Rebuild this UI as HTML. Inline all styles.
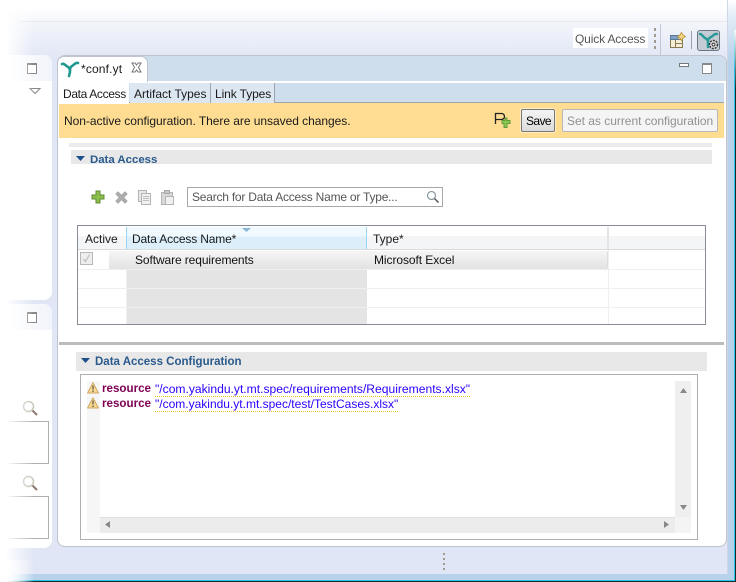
<!DOCTYPE html>
<html><head><meta charset="utf-8"><style>
html,body{margin:0;padding:0}
#r{position:relative;width:736px;height:582px;overflow:hidden;background:#fff;font-family:"Liberation Sans",sans-serif;font-size:12px;color:#1a1a1a}
#r div,#r svg{position:absolute;box-sizing:border-box}
.t{white-space:nowrap;line-height:14px}
</style></head><body><div id="r">
<div style="left:0;top:0;width:736px;height:582px;background:linear-gradient(180deg,#fff 0,#fff 8px,#f4f6fb 21px,#e0e6f5 60px)"></div>
<div style="left:20px;top:21px;width:707px;height:1px;background:#e6e8ee"></div>
<div style="left:727px;top:0;width:9px;height:582px;background:linear-gradient(180deg,#fff 0,#e8f0f8 12px,#b8d2ec 60px)"></div>
<div style="left:727px;top:0;width:1px;height:574px;background:#cfd6e6"></div>
<div style="left:0;top:574px;width:736px;height:6px;background:#b8d2ec"></div>
<div style="left:0;top:580px;width:736px;height:1px;background:#20c8e0"></div>
<div style="left:0;top:581px;width:736px;height:1px;background:#1a2a30"></div>
<div style="left:734px;top:30px;width:1px;height:551px;background:linear-gradient(180deg,#e8f4f8,#20c8e0 40px)"></div>
<div style="left:735px;top:30px;width:1px;height:552px;background:linear-gradient(180deg,#fff,#1a2a30 60px)"></div>

<div style="left:573px;top:28px;width:75px;height:20px;background:#fff"></div>
<div class="t" style="left:575px;top:32px;color:#555;letter-spacing:-.15px">Quick Access</div>
<div style="left:654px;top:28px;width:2px;height:21px;background:repeating-linear-gradient(180deg,#a09a90 0,#a09a90 3px,transparent 3px,transparent 6px)"></div>
<div style="left:660px;top:24px;width:1px;height:31px;background:#c4c8d4"></div>
<svg style="left:669px;top:32px" width="17" height="17" viewBox="0 0 17 17"><rect x="1.500" y="3.500" width="12" height="12" fill="#f4eed8" stroke="#8a7a50"/><path d="M1.500 7.500H13.500M6.500 3.500V15.500M6.500 11.500H13.500" stroke="#8a7a50" fill="none"/><path d="M1.500 3.500H9V7.500H1.500Z" fill="#7fa0c0" stroke="#5a7a9a"/><path d="M12.500 .5L14 3 16.500 4.500 14 6 12.500 8.500 11 6 8.500 4.500 11 3Z" fill="#f5d98a" stroke="#c09a40"/></svg>
<div style="left:691px;top:31px;width:1px;height:18px;background:#9aa0aa"></div>
<div style="left:697px;top:30px;width:23px;height:21px;background:#c4ccd4;border:1px solid #6c7680;border-radius:3px"></div>
<svg style="left:698px;top:31px" width="22" height="20" viewBox="0 0 22 20"><path d="M2 3C4 3 5 6 7 7 9 8 10 9 10 11L10 16M19 3C17 2 15 5 13 6 11 7 10 8 10 10" stroke="#2a9a98" stroke-width="2.500" fill="none" stroke-linecap="round"/><circle cx="15.500" cy="13.500" r="4" fill="#e8e8e8" stroke="#333" stroke-width="1.500" stroke-dasharray="2 1"/><circle cx="15.500" cy="13.500" r="1.500" fill="#fff" stroke="#333"/></svg>

<!-- left panels -->
<div style="left:-10px;top:55px;width:62px;height:245px;background:#fff;border-radius:0 8px 8px 0"></div>
<div style="left:0;top:55px;width:52px;height:26px;background:linear-gradient(90deg,#fff,#f2f4fb);border-radius:0 8px 0 0"></div>
<div style="left:27px;top:63px;width:10px;height:11px;border:1px solid #888;border-top:2px solid #888;background:#fff"></div>
<svg style="left:29px;top:88px" width="12" height="7" viewBox="0 0 12 7"><path d="M1 .5H11L6 5.500Z" fill="#fff" stroke="#888"/></svg>
<div style="left:-10px;top:304px;width:62px;height:244px;background:#fff;border-radius:0 8px 8px 0"></div>
<div style="left:0;top:304px;width:52px;height:26px;background:linear-gradient(90deg,#fff,#f2f4fb);border-radius:0 8px 0 0"></div>
<div style="left:27px;top:312px;width:10px;height:11px;border:1px solid #888;border-top:2px solid #888;background:#fff"></div>
<svg style="left:22px;top:400px" width="16" height="16" viewBox="0 0 16 16"><circle cx="6.500" cy="6.500" r="5" fill="#fff" stroke="#c4c8b8" stroke-width="1.500"/><path d="M10.500 10.500L15 15" stroke="#8a7a70" stroke-width="2"/></svg>
<svg style="left:22px;top:475px" width="16" height="16" viewBox="0 0 16 16"><circle cx="6.500" cy="6.500" r="5" fill="#fff" stroke="#c4c8b8" stroke-width="1.500"/><path d="M10.500 10.500L15 15" stroke="#8a7a70" stroke-width="2"/></svg>
<div style="left:0;top:421px;width:49px;height:43px;border:1px solid #b0b0b0;border-left:0"></div>
<div style="left:0;top:496px;width:49px;height:43px;border:1px solid #b0b0b0;border-left:0"></div>
<div style="left:0;top:0;width:34px;height:582px;background:linear-gradient(90deg,#fff 0,#fff 6px,rgba(255,255,255,.6) 16px,rgba(255,255,255,0) 100%)"></div>

<!-- editor -->
<div style="left:57px;top:55px;width:670px;height:492px;background:#fff;border:1px solid #c0c4cc;border-radius:8px"></div>
<div style="left:58px;top:56px;width:668px;height:25px;background:#cfdeed;border-radius:7px 7px 0 0"></div>
<div style="left:57px;top:56px;width:91px;height:26px;background:#fff;border:1px solid #c0c4cc;border-bottom:0;border-radius:7px 7px 0 0"></div>
<svg style="left:60px;top:60px" width="20" height="18" viewBox="0 0 20 18"><path d="M2 4C4 3 6 6 8 7 10 8 10 10 10 12L9 16M18 3C16 2 14 5 12 6 10 7 10 9 10 11" stroke="#1f9a90" stroke-width="2.600" fill="none" stroke-linecap="round"/></svg>
<div class="t" style="left:81px;top:62px;letter-spacing:.15px">*conf.yt</div>
<svg style="left:131px;top:62px" width="11" height="11" viewBox="0 0 11 11"><path d="M1 1L4 1 5.500 3 7 1 10 1 7.500 5.500 10 10 7 10 5.500 8 4 10 1 10 3.500 5.500Z" fill="#fff" stroke="#777"/></svg>
<div style="left:679px;top:63px;width:10px;height:4px;background:#fff;border:1px solid #777"></div>
<div style="left:702px;top:63px;width:10px;height:11px;border:1px solid #888;border-top:2px solid #888;background:#fff"></div>

<div style="left:59px;top:83px;width:665px;height:19px;background:#cfdeed"></div>
<div style="left:59px;top:102px;width:665px;height:1px;background:#9ca4ac"></div>
<div style="left:59px;top:83px;width:70px;height:21px;background:#fff;z-index:2"></div>
<div class="t" style="left:63px;top:87px;z-index:3;letter-spacing:-.35px">Data Access</div>
<div style="left:130px;top:83px;width:81px;height:20px;background:#dce7f2;border-right:1px solid #9ca4ac"></div>
<div class="t" style="left:134px;top:87px;">Artifact Types</div>
<div style="left:211px;top:83px;width:64px;height:20px;background:#dce7f2;border-right:1px solid #9ca4ac"></div>
<div class="t" style="left:215px;top:87px;letter-spacing:-.1px">Link Types</div>

<div style="left:59px;top:103px;width:665px;height:35px;background:#fedd93"></div>
<div class="t" style="left:64px;top:114px;letter-spacing:-.04px">Non-active configuration. There are unsaved changes.</div>
<svg style="left:494px;top:112px" width="18" height="17" viewBox="0 0 18 17"><path d="M1.500 12V1.500H7.500A3 3 0 0 1 7.500 7.500H1.500" fill="none" stroke="#222" stroke-width="1.300"/><path d="M9 7.500H12V5H14V7.500H17V10.500H14V14.500H11V10.500H9Z" transform="translate(-1 1)" fill="#8cc850" stroke="#5f9a3a"/></svg>
<div style="left:521px;top:109px;width:34px;height:23px;background:linear-gradient(180deg,#f4f4f4,#dcdcdc);border:1px solid #777;border-radius:2px;box-shadow:0 0 0 1px #fdeec8"></div>
<div class="t" style="left:526px;top:114px;color:#000;letter-spacing:-.6px">Save</div>
<div style="left:562px;top:109px;width:156px;height:23px;background:#f4f4f4;border:1px solid #b8b8b8;border-radius:2px"></div>
<div class="t" style="left:567px;top:114px;color:#909090;letter-spacing:-.02px">Set as current configuration</div>

<!-- Data Access section -->
<div style="left:69px;top:143px;width:643px;height:4px;background:#ececec"></div>
<div style="left:71px;top:150px;width:641px;height:14px;background:#e8e8e8"></div>
<svg style="left:76px;top:156px" width="9" height="5" viewBox="0 0 9 5"><path d="M0 0H9L4.500 5Z" fill="#1f4f8a"/></svg>
<div class="t" style="left:90px;top:152px;font-weight:bold;color:#2a5a8c;font-size:11.400px;transform:translateY(1px)">Data Access</div>

<svg style="left:91px;top:190px" width="14" height="14" viewBox="0 0 14 14"><path d="M5 1H9V5H13V9H9V13H5V9H1V5H5Z" fill="#8cc04a" stroke="#5f8a30"/></svg>
<svg style="left:114px;top:190px" width="15" height="15" viewBox="0 0 15 15"><path d="M2 4L4 2 7.500 5.500 11 2 13 4 9.500 7.500 13 11 11 13 7.500 9.500 4 13 2 11 5.500 7.500Z" fill="#b0b0b0" stroke="#a4a4a4"/></svg>
<svg style="left:137px;top:190px" width="15" height="15" viewBox="0 0 15 15"><rect x="1.500" y=".5" width="8" height="11" fill="#e8e8e8" stroke="#b4b4b4"/><rect x="4.500" y="3.500" width="9" height="11" fill="#f0f0f0" stroke="#b4b4b4"/><path d="M6 6.500H12M6 8.500H12M6 10.500H12" stroke="#c0c0c0"/></svg>
<svg style="left:160px;top:190px" width="15" height="15" viewBox="0 0 15 15"><rect x="1.500" y="2.500" width="11" height="12" fill="#d8d8d8" stroke="#b4b4b4"/><rect x="4.500" y=".5" width="5" height="3" fill="#c8c8c8" stroke="#a8a8a8"/><rect x="5.500" y="6.500" width="8" height="8" fill="#f0f0f0" stroke="#b4b4b4"/></svg>
<div style="left:187px;top:187px;width:256px;height:20px;background:#fff;border:1px solid #a8a8a8"></div>
<div class="t" style="left:192px;top:190px;color:#555;letter-spacing:-.22px">Search for Data Access Name or Type...</div>
<svg style="left:426px;top:190px" width="13" height="13" viewBox="0 0 13 13"><circle cx="5.500" cy="5.500" r="4" fill="#fff" stroke="#8a9aa0" stroke-width="1.200"/><path d="M8.500 8.500L12.500 12.500" stroke="#555" stroke-width="1.500"/></svg>

<!-- table -->
<div style="left:77px;top:225px;width:629px;height:100px;background:#fff;border:1px solid #888c94"></div>
<div style="left:78px;top:236px;width:627px;height:13px;background:#f4f5f7"></div>
<div style="left:126px;top:227px;width:241px;height:22px;background:linear-gradient(180deg,#f0f9fe 0,#f0f9fe 9px,#dbeefa 10px,#dbeefa 100%);border-left:1px solid #9cd4f4;border-right:1px solid #9cd4f4"></div>
<div style="left:78px;top:249px;width:627px;height:1px;background:#d8dadd"></div>
<div style="left:607px;top:227px;width:2px;height:22px;background:#e4e4e4"></div>
<svg style="left:242px;top:228px" width="9" height="4" viewBox="0 0 9 4"><path d="M0 0H9L4.500 4Z" fill="#8ab8d8"/></svg>
<div class="t" style="left:85px;top:232px">Active</div>
<div class="t" style="left:132px;top:232px;letter-spacing:-.15px">Data Access Name*</div>
<div class="t" style="left:373px;top:232px">Type*</div>
<div style="left:109px;top:251px;width:499px;height:18px;background:linear-gradient(180deg,#f6f6f6,#e2e2e2);border-right:1px solid #ddd;border-radius:0 2px 2px 0"></div>
<div style="left:80px;top:252px;width:13px;height:13px;background:#eee;border:1px solid #b8b8b8"></div>
<svg style="left:82px;top:254px" width="9" height="9" viewBox="0 0 9 9"><path d="M1.500 5L3.500 7.500 7.500 .5" stroke="#c0c0c0" fill="none" stroke-width="1.200"/></svg>
<div class="t" style="left:135px;top:253px;color:#111;letter-spacing:-.1px">Software requirements</div>
<div class="t" style="left:374px;top:253px;color:#111;letter-spacing:-.07px">Microsoft Excel</div>
<div style="left:127px;top:270px;width:240px;height:54px;background:#e4e4e4"></div>
<div style="left:78px;top:269px;width:627px;height:1px;background:#efefef"></div>
<div style="left:78px;top:288px;width:627px;height:1px;background:#efefef"></div>
<div style="left:78px;top:307px;width:627px;height:1px;background:#efefef"></div>
<div style="left:608px;top:250px;width:1px;height:74px;background:#efefef"></div>
<div style="left:126px;top:270px;width:1px;height:54px;background:#efefef"></div>

<div style="left:59px;top:342px;width:665px;height:3px;background:#bcbcbc"></div>

<!-- config -->
<div style="left:76px;top:352px;width:631px;height:19px;background:#e8e8e8"></div>
<svg style="left:81px;top:358px" width="9" height="5" viewBox="0 0 9 5"><path d="M0 0H9L4.500 5Z" fill="#1f4f8a"/></svg>
<div class="t" style="left:95px;top:355px;font-weight:bold;color:#2a5a8c;font-size:11.500px">Data Access Configuration</div>
<div style="left:80px;top:374px;width:618px;height:166px;background:#fff;border:1px solid #aeaeb4"></div>
<div style="left:87px;top:381px;width:13px;height:152px;background:#f6f6f6"></div>
<svg style="left:87px;top:382px" width="12" height="12" viewBox="0 0 12 12"><path d="M6 .7L11.500 11H.5Z" fill="#f8d890" stroke="#d0a868" stroke-linejoin="round"/><path d="M6 3.500V7.500M6 8.500V10" stroke="#333"/></svg>
<svg style="left:87px;top:397px" width="12" height="12" viewBox="0 0 12 12"><path d="M6 .7L11.500 11H.5Z" fill="#f8d890" stroke="#d0a868" stroke-linejoin="round"/><path d="M6 3.500V7.500M6 8.500V10" stroke="#333"/></svg>
<div class="t" style="left:102px;top:382px;font-weight:bold;color:#7f0055;font-size:11.600px">resource</div>
<div class="t" style="left:155px;top:382px;color:#2a00ff;font-size:12.100px;border-bottom:1px dotted #f0c020">"/com.yakindu.yt.mt.spec/requirements/Requirements.xlsx"</div>
<div class="t" style="left:102px;top:397px;font-weight:bold;color:#7f0055;font-size:11.600px">resource</div>
<div class="t" style="left:155px;top:397px;color:#2a00ff;font-size:12px;border-bottom:1px dotted #f0c020">"/com.yakindu.yt.mt.spec/test/TestCases.xlsx"</div>
<div style="left:675px;top:381px;width:16px;height:136px;background:#efefef"></div>
<svg style="left:679px;top:388px" width="9" height="5" viewBox="0 0 9 5"><path d="M4.500 0L8 5H1Z" fill="#888"/></svg>
<svg style="left:679px;top:505px" width="9" height="5" viewBox="0 0 9 5"><path d="M1 0H8L4.500 5Z" fill="#888"/></svg>
<div style="left:100px;top:517px;width:575px;height:16px;background:#ececec;border-top:1px solid #e0e0e0"></div>
<div style="left:675px;top:517px;width:16px;height:16px;background:#f4f4f4"></div>
<svg style="left:105px;top:520px" width="5" height="9" viewBox="0 0 5 9"><path d="M5 1V8L0 4.500Z" fill="#888"/></svg>
<svg style="left:664px;top:520px" width="5" height="9" viewBox="0 0 5 9"><path d="M0 1V8L5 4.500Z" fill="#888"/></svg>

<div style="left:443px;top:553px;width:2px;height:17px;background:repeating-linear-gradient(180deg,#a09a90 0,#a09a90 2px,transparent 2px,transparent 5px)"></div>
<div style="left:0;top:560px;width:34px;height:22px;background:linear-gradient(90deg,#fff 0,rgba(255,255,255,0) 100%)"></div>
</div></body></html>
